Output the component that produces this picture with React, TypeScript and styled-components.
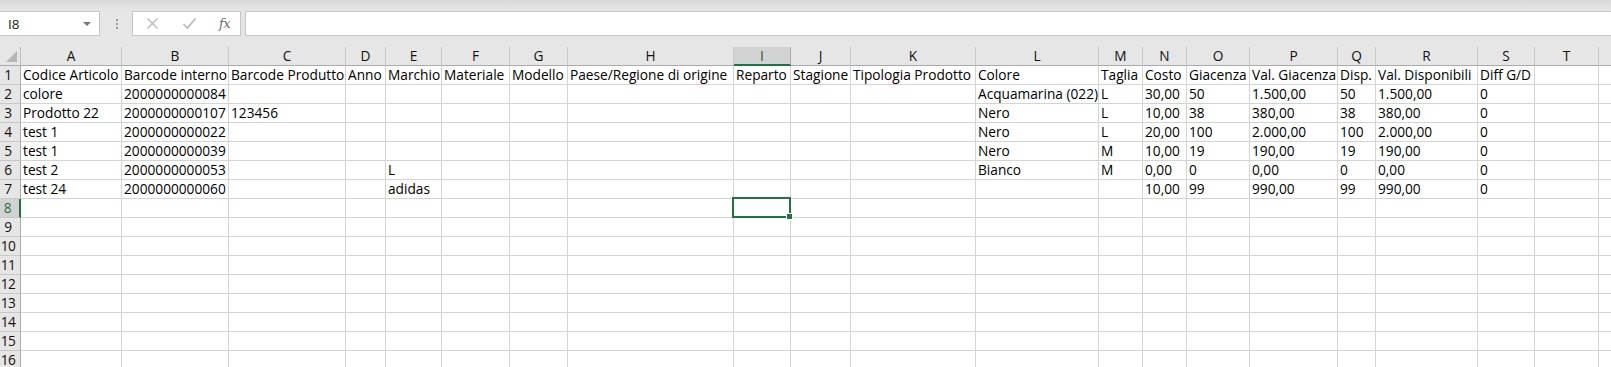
import React from "react";
import styled, { createGlobalStyle } from "styled-components";

const GlobalStyle = createGlobalStyle`
  html, body { margin: 0; padding: 0; background: #e6e6e6; overflow: hidden; }
  body { font-family: "Open Sans", "Noto Sans", sans-serif; }
`;

const COLS = [
  { key: "A", w: 101 },
  { key: "B", w: 107 },
  { key: "C", w: 117 },
  { key: "D", w: 40 },
  { key: "E", w: 56 },
  { key: "F", w: 68 },
  { key: "G", w: 58 },
  { key: "H", w: 166 },
  { key: "I", w: 57 },
  { key: "J", w: 60 },
  { key: "K", w: 125 },
  { key: "L", w: 123 },
  { key: "M", w: 44 },
  { key: "N", w: 44 },
  { key: "O", w: 63 },
  { key: "P", w: 88 },
  { key: "Q", w: 38 },
  { key: "R", w: 102 },
  { key: "S", w: 57 },
  { key: "T", w: 64 },
  { key: "U", w: 64 },
];

const DATA: Record<number, Record<string, string>> = {
  1: {
    A: "Codice Articolo", B: "Barcode interno", C: "Barcode Produtto", D: "Anno", E: "Marchio",
    F: "Materiale", G: "Modello", H: "Paese/Regione di origine", I: "Reparto", J: "Stagione",
    K: "Tipologia Prodotto", L: "Colore", M: "Taglia", N: "Costo", O: "Giacenza",
    P: "Val. Giacenza", Q: "Disp.", R: "Val. Disponibili", S: "Diff G/D",
  },
  2: { A: "colore", B: "2000000000084", L: "Acquamarina (022)", M: "L", N: "30,00", O: "50", P: "1.500,00", Q: "50", R: "1.500,00", S: "0" },
  3: { A: "Prodotto 22", B: "2000000000107", C: "123456", L: "Nero", M: "L", N: "10,00", O: "38", P: "380,00", Q: "38", R: "380,00", S: "0" },
  4: { A: "test 1", B: "2000000000022", L: "Nero", M: "L", N: "20,00", O: "100", P: "2.000,00", Q: "100", R: "2.000,00", S: "0" },
  5: { A: "test 1", B: "2000000000039", L: "Nero", M: "M", N: "10,00", O: "19", P: "190,00", Q: "19", R: "190,00", S: "0" },
  6: { A: "test 2", B: "2000000000053", E: "L", L: "Bianco", M: "M", N: "0,00", O: "0", P: "0,00", Q: "0", R: "0,00", S: "0" },
  7: { A: "test 24", B: "2000000000060", E: "adidas", N: "10,00", O: "99", P: "990,00", Q: "99", R: "990,00", S: "0" },
};

const SEL_COL = "I";
const SEL_ROW = 8;
const FONT = "13.7px";

const Page = styled.div`
  width: 1611px;
  height: 367px;
  overflow: hidden;
  background: #e6e6e6;
`;

const FormulaBar = styled.div`
  display: flex;
  align-items: stretch;
  height: 25px;
  padding: 11px 0 11px 0;
  background: linear-gradient(to bottom, #d8d8d8 0px, #e4e4e4 9px, #e6e6e6 11px);
`;

const NameBox = styled.div`
  width: 100px;
  flex: none;
  box-sizing: border-box;
  background: #fff;
  border: 1px solid #c6c6c6;
  border-left: none;
  display: flex;
  align-items: center;
  justify-content: space-between;
  padding: 0 8px 0 8px;
  font-size: 13.5px;
  color: #222;
`;

const Caret = styled.span`
  width: 0;
  height: 0;
  border-left: 4px solid transparent;
  border-right: 4px solid transparent;
  border-top: 4px solid #777;
  margin-top: 1px;
`;

const Splitter = styled.div`
  width: 32px;
  flex: none;
  display: flex;
  align-items: center;
  justify-content: center;
  padding-left: 2px;
  box-sizing: border-box;
`;

const Dots = styled.div`
  display: flex;
  flex-direction: column;
  gap: 2px;
  & > span {
    width: 2px;
    height: 2px;
    background: #9a9a9a;
  }
`;

const FxButtons = styled.div`
  width: 109px;
  flex: none;
  box-sizing: border-box;
  background: #fff;
  border: 1px solid #c6c6c6;
  display: flex;
  align-items: center;
  padding-left: 13px;
`;

const FxIconSlot = styled.div<{ $w: number }>`
  width: ${(p) => p.$w}px;
  display: flex;
  align-items: center;
  justify-content: flex-start;
`;

const FxText = styled.span`
  font-family: "DejaVu Serif", "Liberation Serif", serif;
  font-style: italic;
  font-size: 13px;
  color: #6d6d6d;
  letter-spacing: -0.5px;
`;

const FormulaInput = styled.div`
  flex: 1;
  margin-left: 4px;
  background: #fff;
  border: 1px solid #c6c6c6;
  border-right: none;
`;

const Sheet = styled.div`
  display: grid;
  grid-template-columns: 21px ${COLS.map((c) => `${c.w}px`).join(" ")};
  grid-auto-rows: 19px;
  background: #fff;
`;

const Corner = styled.div`
  position: relative;
  background: #e6e6e6;
  border-right: 1px solid #bdbdbd;
  border-bottom: 1px solid #ababab;
  box-sizing: border-box;
  &::after {
    content: "";
    position: absolute;
    right: 3px;
    bottom: 3px;
    width: 0;
    height: 0;
    border-left: 11px solid transparent;
    border-bottom: 11px solid #b6b6b6;
  }
`;

const ColHead = styled.div<{ $sel?: boolean }>`
  box-sizing: border-box;
  background: ${(p) => (p.$sel ? "#d2d2d2" : "#e6e6e6")};
  border-right: 1px solid ${(p) => (p.$sel ? "#ababab" : "#c8c8c8")};
  border-bottom: ${(p) => (p.$sel ? "2px solid #217346" : "1px solid #ababab")};
  font-size: ${FONT};
  color: ${(p) => (p.$sel ? "#1d5c38" : "#111")};
  text-align: center;
  line-height: 18px;
  overflow: hidden;
  white-space: nowrap;
`;

const RowHead = styled.div<{ $sel?: boolean }>`
  box-sizing: border-box;
  background: ${(p) => (p.$sel ? "#d2d2d2" : "#e6e6e6")};
  border-right: ${(p) => (p.$sel ? "2px solid #217346" : "1px solid #ababab")};
  border-bottom: 1px solid #c8c8c8;
  font-size: ${FONT};
  color: ${(p) => (p.$sel ? "#217346" : "#111")};
  text-align: center;
  padding-right: 4px;
  line-height: 18px;
  overflow: hidden;
  white-space: nowrap;
  letter-spacing: -0.5px;
`;

const Cell = styled.div`
  position: relative;
  box-sizing: border-box;
  border-right: 1px solid #d4d4d4;
  border-bottom: 1px solid #d4d4d4;
  padding-left: 2px;
  font-size: ${FONT};
  line-height: 18px;
  color: #000;
  white-space: nowrap;
  overflow: visible;
`;

const Selection = styled.div`
  position: absolute;
  left: -2px;
  top: -2px;
  right: -1px;
  bottom: -1px;
  border: 2px solid #217346;
  pointer-events: none;
  z-index: 2;
`;

const Handle = styled.div`
  position: absolute;
  right: -4px;
  bottom: -4px;
  width: 5px;
  height: 5px;
  background: #217346;
  border: 1px solid #fff;
`;

const XIcon = () => (
  <svg width="13" height="13" viewBox="0 0 13 13">
    <path d="M1.5 1.5 L11.5 11.5 M11.5 1.5 L1.5 11.5" stroke="#b8b8b8" strokeWidth="1.4" fill="none" />
  </svg>
);

const CheckIcon = () => (
  <svg width="15" height="13" viewBox="0 0 15 13">
    <path d="M1.5 7 L5.5 11 L13.5 1.5" stroke="#b8b8b8" strokeWidth="1.6" fill="none" />
  </svg>
);

export default function App() {
  const rows = Array.from({ length: 16 }, (_, i) => i + 1);
  return (
    <Page>
      <GlobalStyle />
      <FormulaBar>
        <NameBox>
          <span>I8</span>
          <Caret />
        </NameBox>
        <Splitter>
          <Dots>
            <span />
            <span />
            <span />
          </Dots>
        </Splitter>
        <FxButtons>
          <FxIconSlot $w={36}>
            <XIcon />
          </FxIconSlot>
          <FxIconSlot $w={37}>
            <CheckIcon />
          </FxIconSlot>
          <FxIconSlot $w={20}>
            <FxText>fx</FxText>
          </FxIconSlot>
        </FxButtons>
        <FormulaInput />
      </FormulaBar>
      <Sheet>
        <Corner />
        {COLS.map((c) => (
          <ColHead key={c.key} $sel={c.key === SEL_COL}>
            {c.key === "U" ? "" : c.key}
          </ColHead>
        ))}
        {rows.map((r) => (
          <React.Fragment key={r}>
            <RowHead $sel={r === SEL_ROW}>{r}</RowHead>
            {COLS.map((c) => (
              <Cell key={c.key}>
                {DATA[r]?.[c.key] ?? ""}
                {r === SEL_ROW && c.key === SEL_COL && (
                  <Selection>
                    <Handle />
                  </Selection>
                )}
              </Cell>
            ))}
          </React.Fragment>
        ))}
      </Sheet>
    </Page>
  );
}
